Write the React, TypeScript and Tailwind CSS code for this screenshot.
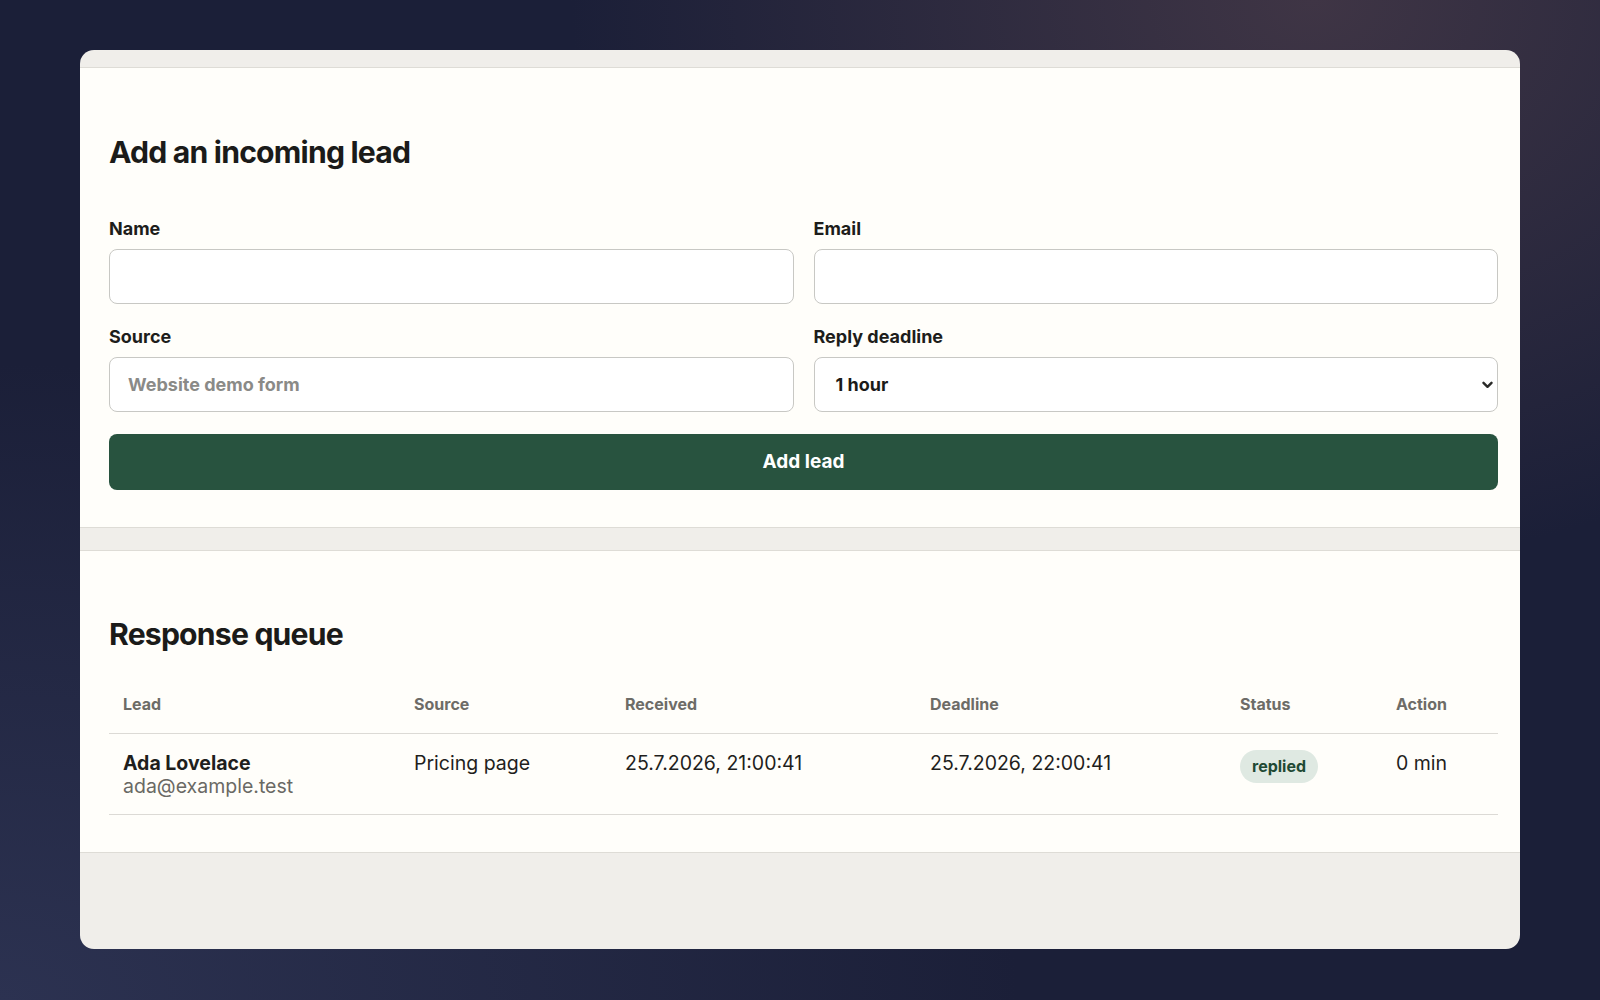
const font = { fontFamily: "Inter, 'Noto Sans', sans-serif" };

const columns = [
  { label: "Lead", width: "w-[291px]" },
  { label: "Source", width: "w-[211px]" },
  { label: "Received", width: "w-[305px]" },
  { label: "Deadline", width: "w-[310px]" },
  { label: "Status", width: "w-[156px]" },
  { label: "Action", width: "" },
];

function Field({ label, children }: { label: string; children: React.ReactNode }) {
  return (
    <div className="flex flex-col">
      <label className="text-[18px] leading-[20px] font-bold text-[#1d1d1b] mb-[10px]">{label}</label>
      {children}
    </div>
  );
}

export default function App() {
  return (
    <div
      style={font}
      className="min-h-[1000px] w-full pt-[50px] pl-[80px] bg-[radial-gradient(ellipse_at_82%_0%,#3f3545_0%,transparent_40%),radial-gradient(ellipse_at_0%_100%,#2c3251_0%,transparent_45%),linear-gradient(#1b1f38,#1b1f38)]"
    >
      <div className="w-[1440px] h-[899px] rounded-[14px] overflow-hidden bg-[#f0eeea] flex flex-col">
        {/* top strip */}
        <div className="h-[18px] border-b border-[#dedcd6] shrink-0" />

        {/* form section */}
        <section className="bg-[#fffefa] border-b border-[#dedcd6] pl-[29px] pr-[22px] pt-[66px] pb-[37px]">
          <h2 className="text-[30.2px] leading-[36px] font-bold tracking-[-0.027em] text-[#1b1b19]">Add an incoming lead</h2>

          <div className="mt-[49px] grid grid-cols-2 gap-x-[20px] gap-y-[23px]">
            <Field label="Name">
              <input className="h-[55px] rounded-[8px] border border-[#c8c8c4] bg-white px-[18px] text-[18px] font-bold outline-none" />
            </Field>
            <Field label="Email">
              <input className="h-[55px] rounded-[8px] border border-[#c8c8c4] bg-white px-[18px] text-[18px] font-bold outline-none" />
            </Field>
            <Field label="Source">
              <input
                placeholder="Website demo form"
                className="h-[55px] rounded-[8px] border border-[#c8c8c4] bg-white px-[18px] text-[18px] font-bold outline-none placeholder:text-[#8a8a87]"
              />
            </Field>
            <Field label="Reply deadline">
              <div className="h-[55px] rounded-[8px] border border-[#c8c8c4] bg-white pl-[21px] pr-[4px] flex items-center justify-between">
                <span className="text-[18px] font-bold text-[#1b1b19]">1 hour</span>
                <svg width="11" height="8" viewBox="0 0 11 8" fill="none">
                  <path d="M1.5 1.8 L5.5 5.8 L9.5 1.8" stroke="#2a2a28" strokeWidth="2.4" strokeLinecap="round" strokeLinejoin="round" />
                </svg>
              </div>
            </Field>
          </div>

          <button className="mt-[22px] w-full h-[56px] rounded-[8px] bg-[#28533f] text-white text-[19px] font-bold">
            Add lead
          </button>
        </section>

        <div className="h-[22px] shrink-0" />

        {/* queue section */}
        <section className="bg-[#fffefa] border-t border-b border-[#dedcd6] pl-[29px] pr-[22px] pt-[65px] pb-[37px]">
          <h2 className="text-[30.2px] leading-[36px] font-bold tracking-[-0.027em] text-[#1b1b19]">Response queue</h2>

          <div className="mt-[29px]">
            <div className="flex border-b border-[#dcdad5]">
              {columns.map((c) => (
                <div
                  key={c.label}
                  className={`${c.width} px-[14px] pt-[13px] pb-[19px] text-[16px] leading-[20px] font-bold text-[#6d6c67] ${c.width ? "shrink-0" : "flex-1"}`}
                >
                  {c.label}
                </div>
              ))}
            </div>
            <div className="flex border-b border-[#dcdad5] text-[19.5px] leading-[23px] text-[#1f1f1d]">
              <div className="w-[291px] shrink-0 px-[14px] pt-[18px] pb-[16px]">
                <div className="font-bold">Ada Lovelace</div>
                <div className="text-[#6a6964]">ada@example.test</div>
              </div>
              <div className="w-[211px] shrink-0 px-[14px] pt-[18px]">Pricing page</div>
              <div className="w-[305px] shrink-0 px-[14px] pt-[18px]">25.7.2026, 21:00:41</div>
              <div className="w-[310px] shrink-0 px-[14px] pt-[18px]">25.7.2026, 22:00:41</div>
              <div className="w-[156px] shrink-0 px-[14px] pt-[16px]">
                <span className="inline-block rounded-full bg-[#dfe9e2] px-[12px] py-[6px] text-[16px] leading-[21px] font-bold text-[#1f4a34]">
                  replied
                </span>
              </div>
              <div className="flex-1 px-[14px] pt-[18px]">0 min</div>
            </div>
          </div>
        </section>
      </div>
    </div>
  );
}
